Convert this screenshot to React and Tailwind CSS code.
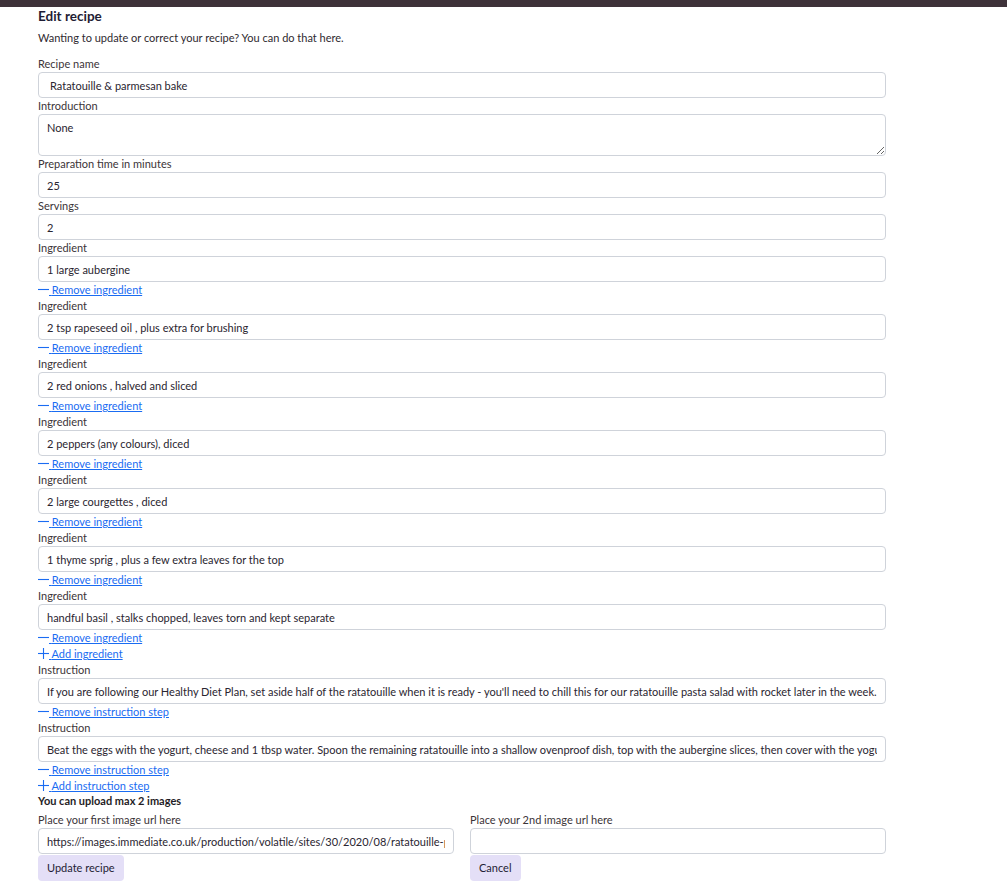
import React, { useState } from 'react';

const font = { fontFamily: 'Lato, "Noto Sans", sans-serif' };

function Minus() {
  return (
    <svg width="11" height="11" viewBox="0 0 16 16" className="inline-block align-[-1px]" fill="currentColor">
      <rect x="0" y="7.2" width="16" height="1.6" />
    </svg>
  );
}

function Plus() {
  return (
    <svg width="11" height="11" viewBox="0 0 16 16" className="inline-block align-[-1px]" fill="currentColor">
      <rect x="0" y="7.2" width="16" height="1.6" />
      <rect x="7.2" y="0" width="1.6" height="16" />
    </svg>
  );
}

function Label({ children }) {
  return <label className="block h-4 leading-4 text-[11px] text-[#3b3438]">{children}</label>;
}

function Field({ value, left = 'pl-[8px]' }) {
  return (
    <input
      readOnly
      value={value}
      className={`block h-[26px] w-full rounded-[4px] border border-[#cfd3da] bg-white ${left} pr-2 text-[11px] text-[#2a2530] outline-none`}
    />
  );
}

function LinkRow({ icon, children }) {
  return (
    <div className="h-4 leading-4 text-[11px]">
      <a href="#" className="text-[#1a6cf2] underline">
        {icon}
        {' '}{children}
      </a>
    </div>
  );
}

export default function App() {
  const [ingredients] = useState([
    '1 large aubergine',
    '2 tsp rapeseed oil , plus extra for brushing',
    '2 red onions , halved and sliced',
    '2 peppers (any colours), diced',
    '2 large courgettes , diced',
    '1 thyme sprig , plus a few extra leaves for the top',
    'handful basil , stalks chopped, leaves torn and kept separate',
  ]);
  const [steps] = useState([
    "If you are following our Healthy Diet Plan, set aside half of the ratatouille when it is ready - you'll need to chill this for our ratatouille pasta salad with rocket later in the week. If you are not, freeze it for another time.",
    'Beat the eggs with the yogurt, cheese and 1 tbsp water. Spoon the remaining ratatouille into a shallow ovenproof dish, top with the aubergine slices, then cover with the yogurt mixture.',
  ]);

  return (
    <div className="min-h-screen bg-white" style={font}>
      <div className="h-[7px] bg-[#3e3239]" />
      <div className="ml-[38px] w-[848px] pb-4">
        <h2 className="text-[13.5px] font-bold leading-[18px] text-[#1f1d35]">Edit recipe</h2>
        <p className="mt-[5px] text-[11px] leading-4 text-[#2f2a30]">Wanting to update or correct your recipe? You can do that here.</p>

        <form className="mt-[10px]" onSubmit={(e) => e.preventDefault()}>
          <Label>Recipe name</Label>
          <Field value="Ratatouille & parmesan bake" left="pl-[11px]" />

          <Label>Introduction</Label>
          <textarea
            readOnly
            value="None"
            className="block h-[42px] w-full rounded-[4px] border border-[#cfd3da] bg-white px-[8px] pt-[5px] text-[11px] text-[#2a2530] outline-none"
          />

          <Label>Preparation time in minutes</Label>
          <Field value="25" />

          <Label>Servings</Label>
          <Field value="2" />

          {ingredients.map((ing, i) => (
            <div key={i}>
              <Label>Ingredient</Label>
              <Field value={ing} />
              <LinkRow icon={<Minus />}>Remove ingredient</LinkRow>
            </div>
          ))}
          <LinkRow icon={<Plus />}>Add ingredient</LinkRow>

          {steps.map((s, i) => (
            <div key={i}>
              <Label>Instruction</Label>
              <Field value={s} />
              <LinkRow icon={<Minus />}>Remove instruction step</LinkRow>
            </div>
          ))}
          <LinkRow icon={<Plus />}>Add instruction step</LinkRow>

          <p className="h-[14px] text-[11px] font-bold leading-[14px] text-[#1f1d25]">You can upload max 2 images</p>

          <div className="mt-[4px] grid grid-cols-2 gap-4">
            <div>
              <Label>Place your first image url here</Label>
              <Field value="https://images.immediate.co.uk/production/volatile/sites/30/2020/08/ratatouille-parmesan-bake-d7bb1a7.jpg" />
              <button type="submit" className="h-[26px] rounded-[4px] bg-[#e4dff7] px-[9px] text-[11px] text-[#1f1d35]">Update recipe</button>
            </div>
            <div>
              <Label>Place your 2nd image url here</Label>
              <Field value="" />
              <button type="button" className="h-[26px] rounded-[4px] bg-[#e4dff7] px-[9px] text-[11px] text-[#1f1d35]">Cancel</button>
            </div>
          </div>
        </form>
      </div>
    </div>
  );
}
